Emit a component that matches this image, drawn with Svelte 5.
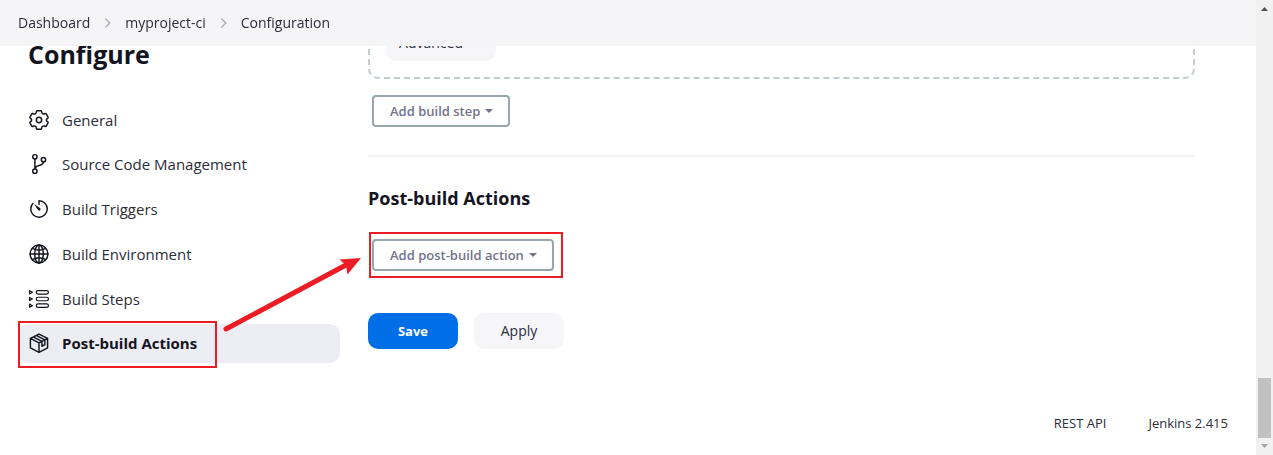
<script>
  const crumbs = ['Dashboard', 'myproject-ci', 'Configuration'];
  const sections = [
    { label: 'General', icon: 'gear' },
    { label: 'Source Code Management', icon: 'branch' },
    { label: 'Build Triggers', icon: 'timer' },
    { label: 'Build Environment', icon: 'globe' },
    { label: 'Build Steps', icon: 'steps' },
    { label: 'Post-build Actions', icon: 'box', active: true }
  ];
</script>

<div class="window">
  <div class="page">
    <header>
      <nav class="crumbs" aria-label="Breadcrumb">
        {#each crumbs as crumb, i}
          {#if i > 0}
            <svg class="chevron" viewBox="0 0 12 12"><path d="M4 1.5 8.5 6 4 10.5" /></svg>
          {/if}
          <a href="#top">{crumb}</a>
        {/each}
      </nav>
    </header>

    <div class="columns">
      <aside>
        <h1>Configure</h1>
        <nav class="sections" aria-label="Sections">
          {#each sections as section}
            <a href="#section" class:active={section.active}>
              <svg class="icon {section.icon}" viewBox="0 0 512 512">
                {#if section.icon === 'gear'}
                  <circle cx="256" cy="256" r="62" />
                  <path d="M212 42h88q14 0 16 14l6 30q3 14 16 21l10 6q12 7 25 3l30-10q14-4 21 8l42 73q7 12-3 22l-24 20q-10 9-10 21v12q0 12 10 21l24 20q10 10 3 22l-42 73q-7 12-21 8l-30-10q-13-4-25 3l-10 6q-13 7-16 21l-6 30q-2 14-16 14h-88q-14 0-16-14l-6-30q-3-14-16-21l-10-6q-12-7-25-3l-30 10q-14 4-21-8l-42-73q-7-12 3-22l24-20q10-9 10-21v-12q0-12-10-21l-24-20q-10-10-3-22l42-73q7-12 21-8l30 10q13 4 25-3l10-6q13-7 16-21l6-30q2-14 16-14z" />
                {:else if section.icon === 'branch'}
                  <circle cx="160" cy="88" r="50" />
                  <circle cx="160" cy="424" r="50" />
                  <circle cx="360" cy="156" r="50" />
                  <path d="M160 374V138M360 206c0 124-200 48-200 168" />
                {:else if section.icon === 'timer'}
                  <path d="M112.91 128A191.85 191.85 0 0064 254c-1.18 106.35 85.65 193.8 192 194 106.2.2 192-85.83 192-192 0-104.54-83.55-189.61-187.5-192a4.36 4.36 0 00-4.5 4.37V152" />
                  <path class="solid" d="M233.38 278.63l-79-113a8.13 8.13 0 0111.32-11.32l113 79a32.5 32.5 0 01-37.25 53.26 33.21 33.21 0 01-8.07-7.94z" />
                {:else if section.icon === 'globe'}
                  <circle cx="256" cy="256" r="208" />
                  <ellipse cx="256" cy="256" rx="100" ry="208" />
                  <path d="M256 48v416M48 256h416M100 126c100 52 212 52 312 0M100 386c100-52 212-52 312 0" />
                {:else if section.icon === 'steps'}
                  <rect x="192" y="60" width="284" height="82" rx="41" />
                  <rect x="192" y="215" width="284" height="82" rx="41" />
                  <rect x="192" y="370" width="284" height="82" rx="41" />
                  <path d="M36 64v74l66-37zM36 219v74l66-37zM36 374v74l66-37z" />
                {:else}
                  <path d="M256 48 456 150v218L256 472 56 368V150zM56 150l200 102 200-102M256 252v220M122 114l202 104M190 80l202 104v112l-68 36V218" />
                {/if}
              </svg>
              <span>{section.label}</span>
              {#if section.active}<i class="mark"></i>{/if}
            </a>
          {/each}
        </nav>
      </aside>

      <main>
        <div class="step"><button class="soft">Advanced</button></div>
        <button class="menu">Add build step<i class="caret"></i></button>
        <hr />
        <h2>Post-build Actions</h2>
        <div class="marked">
          <button class="menu">Add post-build action<i class="caret"></i></button>
          <i class="mark"></i>
        </div>
        <div class="actions">
          <button class="primary">Save</button>
          <button class="soft">Apply</button>
        </div>
      </main>
    </div>

    <footer>
      <a href="#api">REST API</a>
      <a href="#version">Jenkins 2.415</a>
    </footer>

    <svg class="arrow" viewBox="0 0 140 80">
      <path d="M6 74 126 10" stroke="#ed1c24" stroke-width="5" stroke-linecap="round" />
      <path d="M141 3 119.500 4.500 126 10 127.500 19.500z" fill="#ed1c24" />
    </svg>
  </div>

  <div class="scrollbar" aria-hidden="true">
    <svg viewBox="0 0 17 17"><path d="M5 11h7L8.500 7z" fill="#505050" /></svg>
    <div class="thumb"></div>
    <svg viewBox="0 0 17 17"><path d="M5 6h7l-3.500 4z" fill="#a3a3a3" /></svg>
  </div>
</div>

<style>
  :global(body) {
    margin: 0;
    background: #fff;
  }
  .window {
    display: flex;
    min-height: 100vh;
    font-family: 'Open Sans', 'Noto Sans', sans-serif;
    font-size: 14px;
    line-height: 20px;
    color: #14141f;
  }
  .page {
    position: relative;
    flex: 1;
    min-width: 0;
    display: flex;
    flex-direction: column;
    overflow: hidden;
  }
  a {
    color: #2c2c38;
    text-decoration: none;
  }
  button {
    font: inherit;
    color: #2c2c38;
    border: 0;
    cursor: pointer;
  }
  header {
    position: absolute;
    inset: 0 0 auto;
    z-index: 2;
    background: rgba(245, 245, 248, 0.96);
    backdrop-filter: blur(15px);
  }
  .crumbs {
    display: flex;
    align-items: center;
    gap: 12px;
    height: 46px;
    padding-left: 18px;
  }
  .chevron {
    width: 11px;
    height: 12px;
    fill: none;
    stroke: #a9a9ba;
    stroke-width: 1.5;
    stroke-linecap: round;
    stroke-linejoin: round;
  }
  .columns {
    display: grid;
    grid-template-columns: 322px 1fr;
    gap: 28px;
    padding: 25px 61px 0 18px;
  }
  h1 {
    margin: 12px 10px 29px;
    font-size: 25px;
    line-height: 34px;
  }
  .sections {
    display: flex;
    flex-direction: column;
    justify-content: space-between;
    min-height: 263px;
  }
  .sections a {
    position: relative;
    display: flex;
    align-items: center;
    gap: 12px;
    height: 39px;
    padding-left: 10px;
    border-radius: 10px;
    font-size: 15px;
  }
  .sections .active {
    background: #ecedf3;
    color: #14141f;
    font-weight: 700;
  }
  .icon {
    width: 22px;
    height: 22px;
    fill: none;
    stroke: #14141f;
    stroke-width: 34;
    stroke-linecap: round;
    stroke-linejoin: round;
  }
  .icon.steps {
    stroke-width: 28;
  }
  .icon .solid {
    fill: #14141f;
    stroke: none;
  }
  .mark {
    position: absolute;
    border: 2px solid #ed1c24;
  }
  .sections .mark {
    inset: -3px 123px -5px 0;
  }
  .marked {
    position: relative;
    width: fit-content;
  }
  .marked .mark {
    inset: -7px -9px -7px 1px;
  }
  main {
    display: flex;
    flex-direction: column;
    align-items: flex-start;
  }
  .step {
    align-self: stretch;
    padding: 0 16px 16px;
    border: 2px dashed #c3cdd1;
    border-top: 0;
    border-radius: 0 0 10px 10px;
  }
  .soft,
  .primary {
    min-width: 90px;
    height: 36px;
    border-radius: 10px;
    background: #f6f6f9;
  }
  .step .soft {
    min-width: 110px;
    padding-right: 26px;
  }
  .primary {
    background: #006ee6;
    color: #fff;
    font-size: 13px;
    font-weight: 700;
  }
  .menu {
    display: flex;
    align-items: center;
    gap: 5px;
    height: 32px;
    margin-left: 4px;
    padding: 0 15px 0 16px;
    border: 2px solid #98a6ad;
    border-radius: 4px;
    background: #fff;
    color: #73738c;
    font-size: 13px;
    font-weight: 600;
  }
  .step + .menu {
    margin-top: 16px;
  }
  .caret {
    border: 4px solid transparent;
    border-top-color: currentColor;
    border-bottom: 0;
  }
  hr {
    align-self: stretch;
    height: 2px;
    margin: 28px 0 29px;
    border: 0;
    background: #f3f3f8;
  }
  h2 {
    margin: 0 0 29px;
    font-size: 18px;
    line-height: 24px;
  }
  .actions {
    display: flex;
    gap: 16px;
    margin-top: 42px;
  }
  footer {
    display: flex;
    justify-content: flex-end;
    gap: 42px;
    margin-top: auto;
    padding: 0 28px 22px 0;
    font-size: 13px;
  }
  .arrow {
    position: absolute;
    left: 220px;
    top: 255px;
    width: 140px;
    height: 80px;
    overflow: visible;
    fill: none;
  }
  .scrollbar {
    display: flex;
    flex-direction: column;
    justify-content: space-between;
    width: 17px;
    background: #f1f1f1;
  }
  .scrollbar svg {
    width: 17px;
    height: 17px;
  }
  .thumb {
    height: 60px;
    margin: auto 2px 0;
    background: #c1c1c1;
  }
</style>
